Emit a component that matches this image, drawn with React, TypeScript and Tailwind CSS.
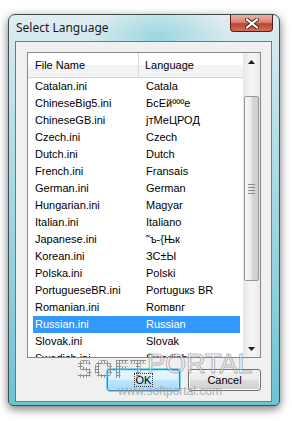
import React from 'react'

type Row = { file: string; lang: string }

const rows: Row[] = [
  { file: 'Catalan.ini', lang: 'Catala' },
  { file: 'ChineseBig5.ini', lang: 'БсЕйºººе' },
  { file: 'ChineseGB.ini', lang: 'јтМеЦРОД' },
  { file: 'Czech.ini', lang: 'Czech' },
  { file: 'Dutch.ini', lang: 'Dutch' },
  { file: 'French.ini', lang: 'Fransais' },
  { file: 'German.ini', lang: 'German' },
  { file: 'Hungarian.ini', lang: 'Magyar' },
  { file: 'Italian.ini', lang: 'Italiano' },
  { file: 'Japanese.ini', lang: '˜ъ-{Њк' },
  { file: 'Korean.ini', lang: 'ЗС±Ы' },
  { file: 'Polska.ini', lang: 'Polski' },
  { file: 'PortugueseBR.ini', lang: 'Portuguкs BR' },
  { file: 'Romanian.ini', lang: 'Romвnг' },
  { file: 'Russian.ini', lang: 'Russian' },
  { file: 'Slovak.ini', lang: 'Slovak' },
  { file: 'Swedish.ini', lang: 'Swedish' },
]

function CloseButton() {
  return (
    <div className="w-[43px] h-[17px] mr-[6px] rounded-b-[4px] border border-t-0 border-[#5a1e1a] bg-[linear-gradient(180deg,#eab3a8_0%,#d98676_45%,#c0442f_55%,#d0705c_100%)] flex items-center justify-center">
      <svg width="14" height="11" viewBox="0 0 14 11">
        <path d="M2 1.5 L12 9.5 M12 1.5 L2 9.5" stroke="#4a2a28" strokeWidth="4" strokeLinecap="square" />
        <path d="M2 1.5 L12 9.5 M12 1.5 L2 9.5" stroke="#ffffff" strokeWidth="2" strokeLinecap="square" />
      </svg>
    </div>
  )
}

function ScrollBar() {
  return (
    <div className="w-[17px] h-full flex flex-col bg-[linear-gradient(90deg,#e6e6e6,#f4f4f4_40%,#f4f4f4_70%,#e8e8e8)]">
      <div className="h-[17px] flex items-center justify-center">
        <svg width="7" height="4" viewBox="0 0 7 4">
          <path d="M0 4 L3.5 0 L7 4 Z" fill="#1c1c1c" />
        </svg>
      </div>
      <div className="h-[26px]" />
      <div className="mx-[1px] h-[185px] rounded-[2px] border border-[#979797] bg-[linear-gradient(90deg,#f6f6f6,#ececec_45%,#d6d6d6_55%,#cfcfcf)] flex flex-col items-center justify-center gap-[2px]">
        <div className="w-[7px] h-[1px] bg-[#8a8a8a]" />
        <div className="w-[7px] h-[1px] bg-[#8a8a8a]" />
        <div className="w-[7px] h-[1px] bg-[#8a8a8a]" />
        <div className="w-[7px] h-[1px] bg-[#8a8a8a]" />
      </div>
      <div className="flex-1" />
      <div className="h-[17px] flex items-center justify-center">
        <svg width="7" height="4" viewBox="0 0 7 4">
          <path d="M0 0 L3.5 4 L7 0 Z" fill="#1c1c1c" />
        </svg>
      </div>
    </div>
  )
}

export default function App() {
  return (
    <div className="relative w-[292px] h-[421px] bg-white overflow-hidden pt-[14px] pl-[8px] font-['Liberation_Sans',Arial,sans-serif] text-[11px] text-black">
      <div className="w-[272px] h-[392px] rounded-t-[7px] rounded-b-[5px] border border-[#3e4c54] shadow-[0_3px_10px_rgba(0,0,0,0.55)] bg-[radial-gradient(ellipse_70px_40px_at_150px_22px,rgba(140,210,222,0.8),rgba(140,210,222,0)),linear-gradient(180deg,#e3edf0_0%,#d3e8ee_7%,#b6dee6_30%,#8ed0dc_70%,#6cc3d2_100%)] flex flex-col">
        <div className="h-[26px] flex justify-between items-start">
          <span className="pl-[7px] pt-[6px] font-['Noto_Sans',sans-serif] text-[12px] leading-[14px] text-[#1a1a1a]">Select Language</span>
          <CloseButton />
        </div>
        <div className="ml-[6px] mr-[7px] mb-[3px] flex-1 border border-[#5f7f8c] bg-[#f0f0f0] pt-[10px] pl-[11px] flex flex-col">
          <div className="w-[234px] h-[306px] border border-[#828790] bg-white flex overflow-hidden">
            <div className="flex-1 flex flex-col overflow-hidden">
              <div className="h-[25px] shrink-0 flex border-b border-[#d5d5d5] bg-[linear-gradient(180deg,#ffffff_0%,#ffffff_50%,#f3f4f5_50%,#f1f2f3_100%)]">
                <div className="w-[111px] pl-[7px] border-r border-[#dadada] flex items-center">File Name</div>
                <div className="pl-[6px] flex items-center">Language</div>
              </div>
              {rows.map((r) => {
                const sel = r.file === 'Russian.ini'
                return (
                  <div
                    key={r.file}
                    className={`h-[17px] shrink-0 ml-[5px] mr-[3px] pl-[2px] flex items-center leading-[17px] ${sel ? 'bg-[#3399ff] text-white' : ''}`}
                  >
                    <span className="w-[111px] whitespace-nowrap">{r.file}</span>
                    <span className="whitespace-nowrap">{r.lang}</span>
                  </div>
                )
              })}
            </div>
            <ScrollBar />
          </div>
          <div className="w-[234px] mt-[11px] flex justify-end gap-[8px]">
            <div className="w-[73px] h-[22px] rounded-[3px] border border-[#3c7fb1] shadow-[0_0_0_1px_#7fd3f6,inset_0_0_0_1px_#b8ecff] bg-[linear-gradient(180deg,#eaf6fd_0%,#d9f0fc_50%,#bee6fd_50%,#a7d9f5_100%)] flex items-center justify-center">
              <span className="border border-dotted border-[#333] px-[1px] leading-[12px]">OK</span>
            </div>
            <div className="w-[73px] h-[22px] rounded-[3px] border border-[#707070] shadow-[inset_0_0_0_1px_#fcfcfc] bg-[linear-gradient(180deg,#f2f2f2_0%,#ebebeb_50%,#dddddd_50%,#cfcfcf_100%)] flex items-center justify-center">
              Cancel
            </div>
          </div>
        </div>
      </div>

      {/* watermark */}
      <span className="absolute left-[76px] top-[356px] pointer-events-none font-['DejaVu_Sans',sans-serif] font-bold text-[24px] leading-[28px] text-transparent bg-clip-text bg-[radial-gradient(circle,#8f8f8f_1px,transparent_1.2px)] bg-[length:3px_3px]">SOFT</span>
      <span className="absolute left-[147px] top-[349px] pointer-events-none font-['Liberation_Sans',sans-serif] text-[27px] leading-[30px] text-white/40 [-webkit-text-stroke:1px_rgba(120,120,120,0.55)]">PORTAL</span>
      <span className="absolute left-[118px] top-[385px] pointer-events-none font-['Liberation_Sans',sans-serif] text-[12px] leading-[13px] text-[#9a9a9a]/80">www.softportal.com</span>
    </div>
  )
}
